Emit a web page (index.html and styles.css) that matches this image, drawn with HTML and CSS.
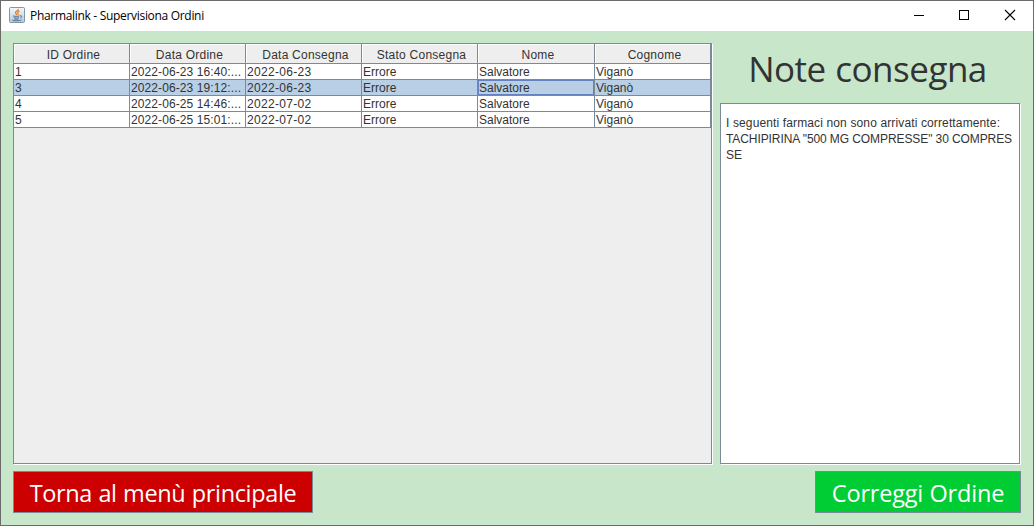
FILE: index.html
```html
<!DOCTYPE html>
<html lang="it">
<head>
<meta charset="utf-8">
<title>Pharmalink - Supervisiona Ordini</title>
<link rel="stylesheet" href="styles.css">
</head>
<body>
<div class="window">
  <header class="titlebar">
    <svg class="app-icon" width="16" height="16" viewBox="0 0 16 16">
      <defs><linearGradient id="tile" x1="0" y1="0" x2="0" y2="1"><stop offset="0" stop-color="#f4f7fa"/><stop offset="1" stop-color="#b9c8d6"/></linearGradient></defs>
      <rect x=".5" y=".5" width="15" height="15" rx="1" fill="url(#tile)" stroke="#8196a9"/>
      <path d="M9.200 1.800c1 1.500-3 2.400-2.700 4 .2.900 1.200 1.300 1.200 2.200M10.600 4c-1.600.6-2.300 1.400-1.700 2.300.5.700.2 1.200-.2 1.600" fill="none" stroke="#ec8122" stroke-width="1.300"/>
      <path d="M4 8.900c1 .6 5.300.6 6.500 0M4.800 10.700c1.200.5 4.100.5 5.200 0M5.500 12.100c1 .4 2.900.4 3.800 0M11 8.800c2.300-.5 2.400 1.500.1 2.300M3.300 13c1 1 7.500 1.100 9.200-.2" fill="none" stroke="#4d7197" stroke-width="1"/>
    </svg>
    <span class="caption">Pharmalink - Supervisiona Ordini</span>
    <svg class="controls" width="138" height="29" viewBox="0 0 138 29" fill="none" stroke="#000" shape-rendering="crispEdges">
      <path d="M19 14.500h10M64.500 9.500h9v9h-9z"/>
      <path d="M110 9l10 10M120 9l-10 10" shape-rendering="auto" stroke-width="1.100"/>
    </svg>
  </header>
  <main class="content">
    <section class="left">
      <div class="table-pane">
        <div class="grid head">
          <div class="th">ID Ordine</div><div class="th">Data Ordine</div><div class="th">Data Consegna</div><div class="th">Stato Consegna</div><div class="th">Nome</div><div class="th">Cognome</div>
        </div>
        <div class="grid row"><div>1</div><div class="stamp">2022-06-23 16:40:...</div><div class="date">2022-06-23</div><div>Errore</div><div>Salvatore</div><div>Viganò</div></div>
        <div class="grid row selected"><div>3</div><div class="stamp">2022-06-23 19:12:...</div><div class="date">2022-06-23</div><div>Errore</div><div class="focus">Salvatore</div><div>Viganò</div></div>
        <div class="grid row"><div>4</div><div class="stamp">2022-06-25 14:46:...</div><div class="date">2022-07-02</div><div>Errore</div><div>Salvatore</div><div>Viganò</div></div>
        <div class="grid row"><div>5</div><div class="stamp">2022-06-25 15:01:...</div><div class="date">2022-07-02</div><div>Errore</div><div>Salvatore</div><div>Viganò</div></div>
      </div>
      <button class="btn back">Torna al menù principale</button>
    </section>
    <section class="right">
      <h1 class="heading">Note consegna</h1>
      <div class="notes">
        <div class="line first">I seguenti farmaci non sono arrivati correttamente:</div>
        <div class="line second">TACHIPIRINA "500 MG COMPRESSE" 30 COMPRES</div>
        <div class="line">SE</div>
      </div>
      <button class="btn fix">Correggi Ordine</button>
    </section>
  </main>
</div>
</body>
</html>
```
FILE: styles.css
```css
* { box-sizing: border-box; }
body { margin: 0; overflow: hidden; }
.window {
  width: 1034px; height: 526px;
  display: flex; flex-direction: column;
  border: 1px solid #6b6b6b;
  background: #c8e6c9;
  font: 12px/16px "Liberation Sans", Arial, sans-serif;
  color: #333;
}
.titlebar {
  height: 30px; flex: none;
  display: flex; align-items: flex-start;
  padding-left: 8px;
  background: #fff; color: #000;
}
.app-icon { margin-top: 6px; }
.caption {
  margin: 7px 0 0 5px;
  font: 12px/16px "Open Sans", "Noto Sans", sans-serif;
  letter-spacing: -0.31px;
  white-space: nowrap;
}
.controls { margin-left: auto; }
.content {
  flex: 1; display: flex; gap: 6px;
  padding: 12px;
}
.left { width: 701px; display: flex; flex-direction: column; }
.right { flex: 1; display: flex; flex-direction: column; }
.table-pane {
  height: 421px;
  width: 699px;
  border: 1px solid #7a8a99;
  background: #eee;
  box-shadow: 1px 1px 0 #fff;
}
.grid {
  display: grid;
  grid-template-columns: 116px 116px 116px 116px 117px 116px;
  width: 697px;
  white-space: nowrap;
}
.th {
  height: 20px;
  padding: 3px 0 0 4px;
  border-right: 1px solid #7a8a99;
  border-bottom: 1px solid #7a8a99;
  box-shadow: inset 1px 1px 0 #fff;
  text-align: center;
  letter-spacing: .24px;
}
.row > div {
  height: 16px;
  padding-left: 1px;
  line-height: 16px;
  border-right: 1px solid #7a8a99;
  border-bottom: 1px solid #7a8a99;
  background: #fff;
}
.row .stamp { letter-spacing: .1px; }
.row .date { letter-spacing: .3px; }
.row.selected > div { background: #b8cfe5; }
.row.selected .focus { box-shadow: inset 0 0 0 1px #6382bf; }
.btn {
  height: 42px; margin: 7px 0 0; padding: 1px 0 0;
  border: 1px solid #7a8a99;
  color: #fff;
  font: 23.5px/32px "Open Sans", "Noto Sans", sans-serif;
  white-space: nowrap;
}
.back { width: 300px; background: #c00; letter-spacing: -.35px; word-spacing: .6px; }
.fix { width: 206px; background: #0c3; align-self: flex-end; letter-spacing: -.2px; word-spacing: .6px; }
.heading {
  height: 60px; margin: 0; padding-right: 6px;
  font: 35px/51px "Open Sans", "Noto Sans", sans-serif;
  letter-spacing: -.5px; word-spacing: 1px;
  text-align: center;
  white-space: nowrap;
}
.notes {
  height: 361px; width: 300px;
  padding: 11px 5px;
  border: 1px solid #7a8a99;
  background: #fff;
  box-shadow: 1px 1px 0 #fff;
  white-space: nowrap;
}
.first { letter-spacing: .13px; }
.second { letter-spacing: -.09px; }
```
